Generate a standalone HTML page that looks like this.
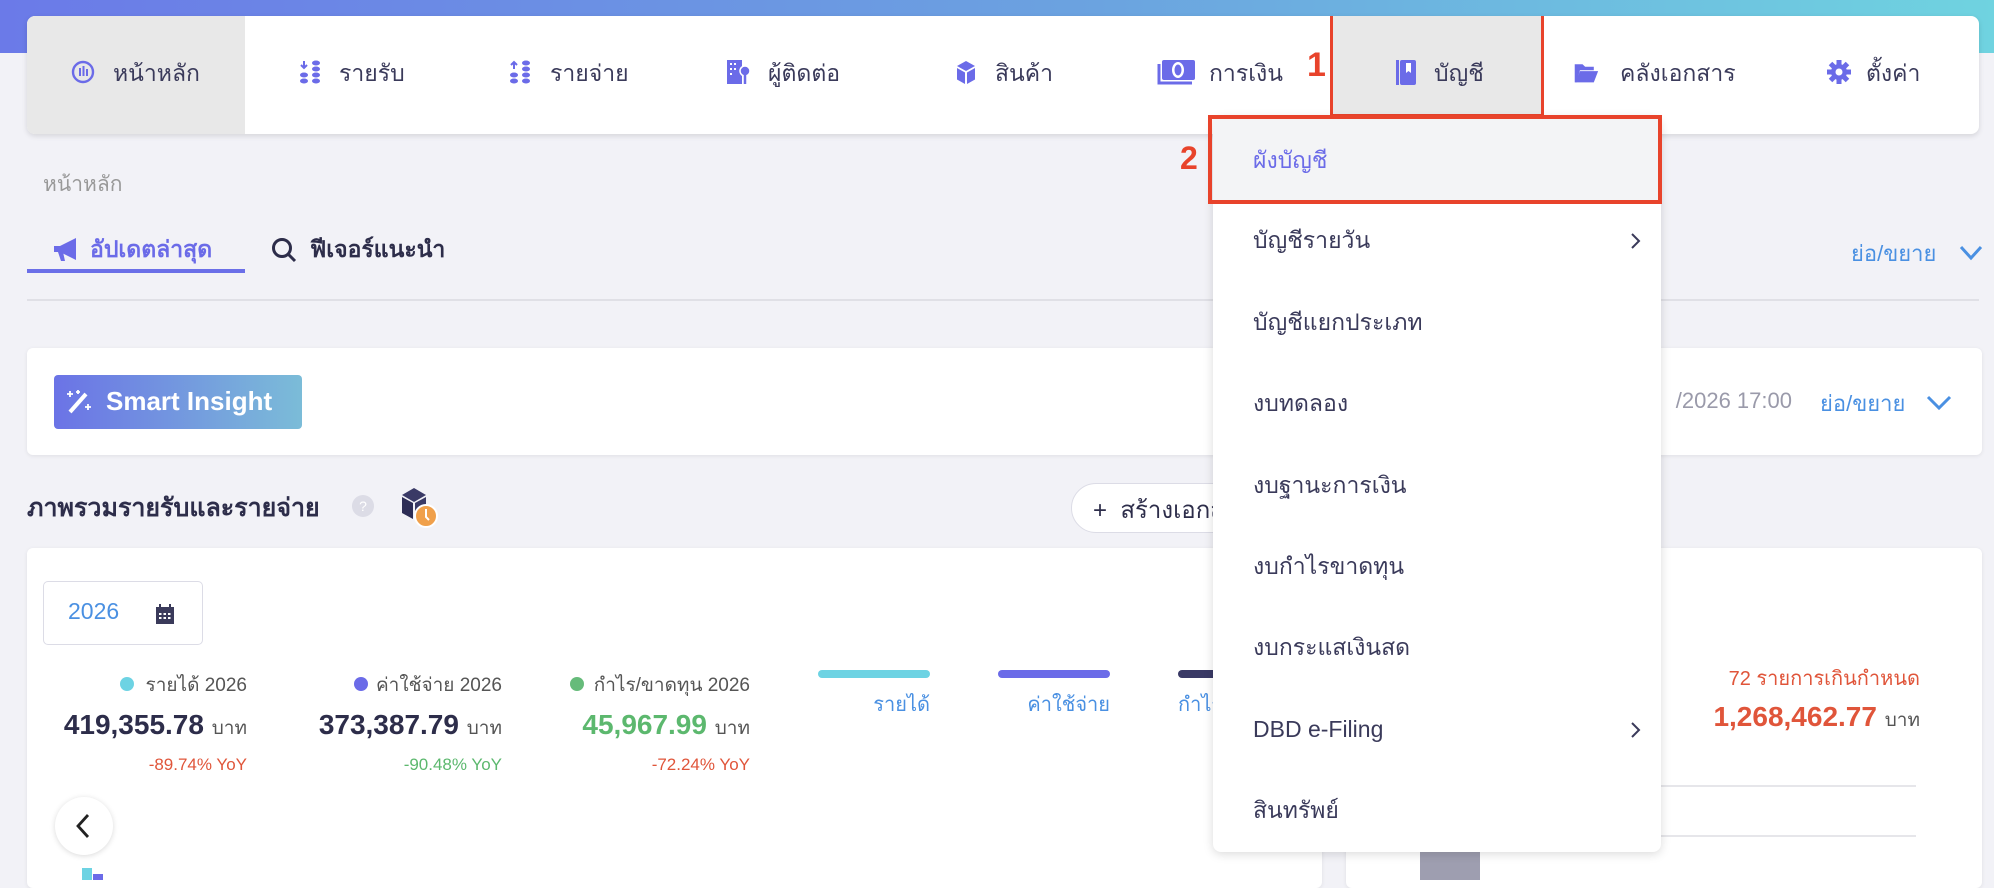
<!DOCTYPE html>
<html><head><meta charset="utf-8"><style>
*{box-sizing:border-box;margin:0;padding:0}
body{width:1994px;height:880px;overflow:hidden;background:#f2f2f7;font-family:"Liberation Sans","Noto Sans CJK SC",sans-serif;position:relative;color:#3a3a5a}
.a{position:absolute;white-space:nowrap}
.hdr{left:0;top:0;width:1994px;height:53px;background:linear-gradient(90deg,#6b7ae8,#6ba3e0 55%,#6fd3e0)}
.nav{left:27px;top:16px;width:1952px;height:118px;background:#fff;border-radius:8px;box-shadow:0 2px 6px rgba(0,0,0,.12);overflow:hidden}
.tab{font-size:23px;color:#3a3a5a;top:56px;line-height:34px}
.ic{top:57px;width:26px;height:30px}
.menu{left:1213px;top:117px;width:448px;height:735px;background:#fff;border-radius:8px;box-shadow:0 2px 10px rgba(0,0,0,.15)}
.mi{left:1253px;font-size:23px;color:#3a3a5a;line-height:30px}
.chev{left:1628px;width:14px;height:22px}
.card{background:#fff;border-radius:6px;box-shadow:0 1px 4px rgba(0,0,0,.08)}
</style></head><body>
<div class="a hdr"></div>
<div class="a nav">
 <div class="a" style="left:0;top:0;width:218px;height:118px;background:#e8e8e8"></div>
 <div class="a" style="left:1303px;top:0;width:214px;height:100px;background:#e8e8e8"></div>
</div>
<div class="a" style="left:1330px;top:16px;width:214px;height:101px;border:3px solid #e8432b;border-top:none"></div>
<svg class="a ic" style="left:70px" viewBox="0 0 26 30"><circle cx="13" cy="15" r="10" fill="none" stroke="#6b6be8" stroke-width="2.4"/><rect x="9" y="11" width="2" height="8" fill="#6b6be8"/><rect x="12.5" y="9" width="2" height="10" fill="#6b6be8"/><rect x="16" y="12" width="2" height="7" fill="#6b6be8"/></svg>
<div class="a tab" style="left:113px">หน้าหลัก</div>
<svg class="a ic" style="left:298px" viewBox="0 0 26 30"><path d="M6 4v6M3 8l3 3 3-3" stroke="#6b6be8" stroke-width="2" fill="none"/><g fill="#6b6be8"><ellipse cx="6" cy="18" rx="4" ry="2.5"/><ellipse cx="6" cy="24" rx="4" ry="2.5"/><ellipse cx="18" cy="6" rx="4" ry="2.5"/><ellipse cx="18" cy="12" rx="4" ry="2.5"/><ellipse cx="18" cy="18" rx="4" ry="2.5"/><ellipse cx="18" cy="24" rx="4" ry="2.5"/></g></svg>
<div class="a tab" style="left:339px">รายรับ</div>
<svg class="a ic" style="left:508px" viewBox="0 0 26 30"><path d="M6 12V5M3 8l3-3 3 3" stroke="#6b6be8" stroke-width="2" fill="none"/><g fill="#6b6be8"><ellipse cx="6" cy="18" rx="4" ry="2.5"/><ellipse cx="6" cy="24" rx="4" ry="2.5"/><ellipse cx="18" cy="6" rx="4" ry="2.5"/><ellipse cx="18" cy="12" rx="4" ry="2.5"/><ellipse cx="18" cy="18" rx="4" ry="2.5"/><ellipse cx="18" cy="24" rx="4" ry="2.5"/></g></svg>
<div class="a tab" style="left:550px">รายจ่าย</div>
<svg class="a ic" style="left:725px" viewBox="0 0 26 30"><rect x="2" y="3" width="15" height="24" fill="#6b6be8"/><g fill="#fff"><rect x="5" y="6" width="2" height="2"/><rect x="9" y="6" width="2" height="2"/><rect x="5" y="11" width="2" height="2"/><rect x="9" y="11" width="2" height="2"/><rect x="5" y="16" width="2" height="2"/></g><circle cx="20" cy="14" r="5" fill="#6b6be8" stroke="#fff" stroke-width="1.5"/><path d="M20 18v9" stroke="#6b6be8" stroke-width="2.5"/></svg>
<div class="a tab" style="left:768px">ผู้ติดต่อ</div>
<svg class="a ic" style="left:953px" viewBox="0 0 26 30"><path d="M13 4l9 5-9 5-9-5z" fill="#6b6be8"/><path d="M4 11l8 4.5V27l-8-4.5z" fill="#6b6be8"/><path d="M22 11l-8 4.5V27l8-4.5z" fill="#6b6be8"/></svg>
<div class="a tab" style="left:995px">สินค้า</div>
<svg class="a" style="left:1157px;top:58px;width:40px;height:28px" viewBox="0 0 40 28"><rect x="5" y="2" width="33" height="20" rx="2" fill="#6b6be8"/><ellipse cx="21" cy="12" rx="6" ry="8" fill="#fff"/><ellipse cx="21" cy="12" rx="3.5" ry="5.5" fill="#6b6be8"/><path d="M2 6v19h33" stroke="#6b6be8" stroke-width="3" fill="none"/></svg>
<div class="a tab" style="left:1209px">การเงิน</div>
<div class="a" style="left:1307px;top:46px;font-size:34px;font-weight:bold;color:#e8432b">1</div>
<svg class="a ic" style="left:1393px" viewBox="0 0 26 30"><rect x="7" y="3" width="16" height="25" rx="2" fill="#6b6be8"/><rect x="3" y="3" width="3" height="25" fill="#6b6be8"/><path d="M13 6v10l2.5-2 2.5 2V6" fill="#fff"/></svg>
<div class="a tab" style="left:1434px">บัญชี</div>
<svg class="a ic" style="left:1573px" viewBox="0 0 30 30"><path d="M2 6h9l3 3h10v4H8L4 27H2z" fill="#6b6be8"/><path d="M8 14h21l-5 13H3z" fill="#6b6be8"/></svg>
<div class="a tab" style="left:1620px">คลังเอกสาร</div>
<svg class="a ic" style="left:1826px" viewBox="0 0 26 30"><g transform="translate(13 15)" fill="#6b6be8"><circle r="8"/><g id="t"><rect x="-2.5" y="-12" width="5" height="6"/></g><use href="#t" transform="rotate(45)"/><use href="#t" transform="rotate(90)"/><use href="#t" transform="rotate(135)"/><use href="#t" transform="rotate(180)"/><use href="#t" transform="rotate(225)"/><use href="#t" transform="rotate(270)"/><use href="#t" transform="rotate(315)"/><circle r="3.5" fill="#fff"/></g></svg>
<div class="a tab" style="left:1866px">ตั้งค่า</div>

<div class="a" style="left:43px;top:168px;font-size:21px;color:#999">หน้าหลัก</div>
<svg class="a" style="left:52px;top:236px;width:30px;height:28px" viewBox="0 0 30 28"><path d="M2 10h6l16-8v22L8 16H2z" fill="#6b6be8"/><path d="M6 16l3 9h4l-2-9z" fill="#6b6be8"/></svg>
<div class="a" style="left:90px;top:232px;font-size:23px;font-weight:bold;color:#6b6be8">อัปเดตล่าสุด</div>
<div class="a" style="left:27px;top:269px;width:218px;height:4px;background:#6b6fe8"></div>
<svg class="a" style="left:270px;top:236px;width:28px;height:28px" viewBox="0 0 28 28"><circle cx="12" cy="12" r="8.5" fill="none" stroke="#2d2d4a" stroke-width="3"/><path d="M18 18l7 7" stroke="#2d2d4a" stroke-width="3"/></svg>
<div class="a" style="left:310px;top:232px;font-size:23px;font-weight:bold;color:#2d2d4a">ฟีเจอร์แนะนำ</div>
<div class="a" style="left:1851px;top:236px;font-size:22px;color:#4a90e2">ย่อ/ขยาย</div>
<svg class="a" style="left:1958px;top:244px;width:26px;height:18px" viewBox="0 0 26 18"><path d="M3 3l10 11L23 3" stroke="#4a90e2" stroke-width="3" fill="none"/></svg>
<div class="a" style="left:27px;top:299px;width:1952px;height:2px;background:#e0e0e6"></div>

<div class="a card" style="left:27px;top:348px;width:1955px;height:107px"></div>
<div class="a" style="left:54px;top:375px;width:248px;height:54px;border-radius:4px;background:linear-gradient(90deg,#6b73e6,#7bbcd8)"></div>
<svg class="a" style="left:64px;top:388px;width:30px;height:28px" viewBox="0 0 30 28"><path d="M6 24L22 6" stroke="#fff" stroke-width="4"/><path d="M6 3v6M3 6h6M24 16v6M21 19h6M14 2v4M12 4h4" stroke="#fff" stroke-width="1.8"/></svg>
<div class="a" style="left:106px;top:386px;font-size:26px;font-weight:bold;color:#fff">Smart Insight</div>
<div class="a" style="right:202px;top:388px;font-size:22px;color:#9a9aaa">/2026 17:00</div>
<div class="a" style="left:1820px;top:386px;font-size:22px;color:#4a90e2">ย่อ/ขยาย</div>
<svg class="a" style="left:1925px;top:394px;width:28px;height:18px" viewBox="0 0 28 18"><path d="M3 3l11 11L25 3" stroke="#4a90e2" stroke-width="3" fill="none"/></svg>

<div class="a" style="left:27px;top:488px;font-size:25px;font-weight:bold;color:#2d2d4a">ภาพรวมรายรับและรายจ่าย</div>
<div class="a" style="left:352px;top:495px;width:22px;height:22px;border-radius:50%;background:#dcdce6;color:#fff;font-size:14px;text-align:center;line-height:22px">?</div>
<svg class="a" style="left:398px;top:486px;width:42px;height:44px" viewBox="0 0 42 44"><path d="M16 2l12 7-12 7-12-7z" fill="#3a3a66"/><path d="M4 11l11 6v16l-11-6z" fill="#2d2d55"/><path d="M28 11l-11 6v16l11-6z" fill="#3a3a66"/><circle cx="28" cy="30" r="11" fill="#f0a04b" stroke="#fff" stroke-width="2"/><path d="M28 23v8l3 3" stroke="#fff" stroke-width="2" fill="none"/></svg>
<div class="a" style="left:1071px;top:483px;width:200px;height:50px;border-radius:25px;background:#fff;border:1.5px solid #dcdce6"></div>
<div class="a" style="left:1093px;top:490px;font-size:24px;color:#2d2d4a">+&nbsp; สร้างเอกสาร</div>

<div class="a card" style="left:27px;top:548px;width:1295px;height:340px"></div>
<div class="a card" style="left:1346px;top:548px;width:636px;height:340px"></div>
<div class="a" style="left:43px;top:581px;width:160px;height:64px;border:1.5px solid #dcdce6;border-radius:5px;background:#fff"></div>
<div class="a" style="left:68px;top:598px;font-size:23px;color:#4a90e2">2026</div>
<svg class="a" style="left:155px;top:603px;width:20px;height:22px" viewBox="0 0 20 22"><rect x="1" y="4" width="18" height="17" fill="#3a3a5a"/><path d="M5 1v4M15 1v4" stroke="#3a3a5a" stroke-width="2"/><g fill="#fff"><rect x="4" y="10" width="2.5" height="2"/><rect x="8.5" y="10" width="2.5" height="2"/><rect x="13" y="10" width="2.5" height="2"/><rect x="4" y="14" width="2.5" height="2"/><rect x="8.5" y="14" width="2.5" height="2"/><rect x="13" y="14" width="2.5" height="2"/></g></svg>

<div class="a" style="left:120px;top:677px;width:14px;height:14px;border-radius:50%;background:#6dd3e3"></div>
<div class="a" style="right:1747px;top:670px;font-size:19px;color:#555">รายได้ 2026</div>
<div class="a" style="right:1747px;top:709px;font-size:28px;font-weight:bold;color:#2d2d4a">419,355.78 <span style="font-size:19px;font-weight:normal;color:#555">บาท</span></div>
<div class="a" style="right:1747px;top:755px;font-size:17px;color:#e0553a">-89.74% YoY</div>
<div class="a" style="left:354px;top:677px;width:14px;height:14px;border-radius:50%;background:#6b6be8"></div>
<div class="a" style="right:1492px;top:670px;font-size:19px;color:#555">ค่าใช้จ่าย 2026</div>
<div class="a" style="right:1492px;top:709px;font-size:28px;font-weight:bold;color:#2d2d4a">373,387.79 <span style="font-size:19px;font-weight:normal;color:#555">บาท</span></div>
<div class="a" style="right:1492px;top:755px;font-size:17px;color:#5cb86e">-90.48% YoY</div>
<div class="a" style="left:570px;top:677px;width:14px;height:14px;border-radius:50%;background:#66bb7a"></div>
<div class="a" style="right:1244px;top:670px;font-size:19px;color:#555">กำไร/ขาดทุน 2026</div>
<div class="a" style="right:1244px;top:709px;font-size:28px;font-weight:bold;color:#5cb86e">45,967.99 <span style="font-size:19px;font-weight:normal;color:#555">บาท</span></div>
<div class="a" style="right:1244px;top:755px;font-size:17px;color:#e0553a">-72.24% YoY</div>

<div class="a" style="left:818px;top:670px;width:112px;height:8px;border-radius:4px;background:#6dd3e3"></div>
<div class="a" style="right:1064px;top:688px;font-size:20px;color:#4a90e2">รายได้</div>
<div class="a" style="left:998px;top:670px;width:112px;height:8px;border-radius:4px;background:#6b6be8"></div>
<div class="a" style="right:884px;top:688px;font-size:20px;color:#4a90e2">ค่าใช้จ่าย</div>
<div class="a" style="left:1178px;top:670px;width:112px;height:8px;border-radius:4px;background:#3a3a66"></div>
<div class="a" style="left:1178px;top:688px;font-size:20px;color:#4a90e2">กำไร</div>

<div class="a" style="left:55px;top:797px;width:58px;height:58px;border-radius:50%;background:#fff;box-shadow:0 1px 6px rgba(0,0,0,.15)"></div>
<svg class="a" style="left:74px;top:812px;width:18px;height:28px" viewBox="0 0 18 28"><path d="M14 3L4 14l10 11" stroke="#222" stroke-width="2.8" fill="none"/></svg>
<div class="a" style="left:82px;top:868px;width:10px;height:12px;background:#6dd3e3"></div>
<div class="a" style="left:93px;top:874px;width:10px;height:6px;background:#6b6be8"></div>

<div class="a" style="right:74px;top:662px;font-size:20px;color:#e0553a">72 รายการเกินกำหนด</div>
<div class="a" style="right:74px;top:701px;font-size:28px;font-weight:bold;color:#e0553a">1,268,462.77 <span style="font-size:19px;font-weight:normal;color:#555">บาท</span></div>
<div class="a" style="left:1346px;top:785px;width:570px;height:2px;background:#e6e6ea"></div>
<div class="a" style="left:1346px;top:835px;width:570px;height:2px;background:#e6e6ea"></div>
<div class="a" style="left:1420px;top:852px;width:60px;height:28px;background:#9e9eb0"></div>

<div class="a menu"></div>
<div class="a" style="left:1213px;top:119px;width:448px;height:83px;background:#f3f4f6"></div>
<div class="a" style="left:1208px;top:115px;width:454px;height:89px;border:4px solid #e8432b"></div>
<div class="a" style="left:1180px;top:140px;font-size:32px;font-weight:bold;color:#e8432b">2</div>
<div class="a mi" style="top:145px;color:#6b6be8">ผังบัญชี</div>
<div class="a mi" style="top:225px">บัญชีรายวัน</div>
<svg class="a chev" style="top:230px" viewBox="0 0 14 22"><path d="M4 4l7 7-7 7" stroke="#3a3a5a" stroke-width="2" fill="none"/></svg>
<div class="a mi" style="top:307px">บัญชีแยกประเภท</div>
<div class="a mi" style="top:388px">งบทดลอง</div>
<div class="a mi" style="top:470px">งบฐานะการเงิน</div>
<div class="a mi" style="top:551px">งบกำไรขาดทุน</div>
<div class="a mi" style="top:632px">งบกระแสเงินสด</div>
<div class="a mi" style="top:714px">DBD e-Filing</div>
<svg class="a chev" style="top:719px" viewBox="0 0 14 22"><path d="M4 4l7 7-7 7" stroke="#3a3a5a" stroke-width="2" fill="none"/></svg>
<div class="a mi" style="top:795px">สินทรัพย์</div>
</body></html>
